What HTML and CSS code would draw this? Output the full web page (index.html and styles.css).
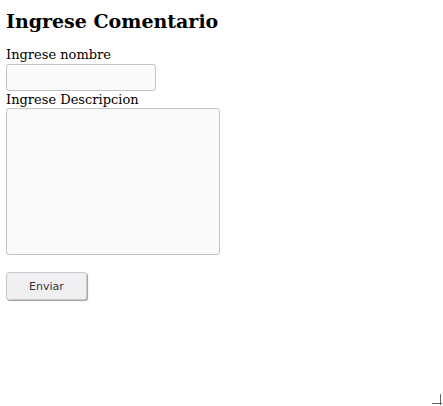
FILE: index.html
```html
<!DOCTYPE html>
<html lang="es">
<head>
<meta charset="utf-8">
<title>Ingrese Comentario</title>
<link rel="stylesheet" href="styles.css">
</head>
<body>
<h3 class="title">Ingrese Comentario</h3>
<form class="form">
  <label class="label" for="nombre">Ingrese nombre</label>
  <input class="field" id="nombre" type="text">
  <label class="label" for="desc">Ingrese Descripcion</label>
  <textarea class="area" id="desc"></textarea>
  <button class="btn" type="button">Enviar</button>
</form>
<svg class="corner" width="12" height="12" viewBox="0 0 12 12" aria-hidden="true">
  <path d="M10.5 1V12M2 10.5H12" stroke="#666" stroke-width="1" fill="none"/>
</svg>
</body>
</html>
```
FILE: styles.css
```css
html, body {
  height: 100%;
}
body {
  margin: 0;
  padding: 6px;
  box-sizing: border-box;
  font-family: "DejaVu Serif", serif;
  font-size: 13px;
  color: #000;
  background: #fff;
  position: relative;
}
.title {
  font-size: 19px;
  font-weight: bold;
  line-height: 22px;
  margin: 4px 0 15px;
}
.form {
  display: flex;
  flex-direction: column;
  align-items: flex-start;
}
.label {
  display: block;
  line-height: 16px;
}
.field {
  width: 150px;
  height: 27px;
  box-sizing: border-box;
  border: 1px solid #c3c3c3;
  border-radius: 3px;
  background: #fafafa;
  margin: 1px 0 1px;
  padding: 0 4px;
}
.area {
  width: 214px;
  height: 147px;
  box-sizing: border-box;
  border: 1px solid #c3c3c3;
  border-radius: 3px;
  background: #fafafa;
  margin: 0;
  resize: none;
}
.btn {
  margin-top: 17px;
  width: 81px;
  height: 28px;
  box-sizing: border-box;
  border: 1px solid #c8c8cc;
  border-radius: 3px;
  background: #f0f0f3;
  box-shadow: 1px 1px 1px #a0a0a0;
  font-family: "DejaVu Sans", sans-serif;
  font-size: 11px;
  color: #333;
  padding: 0;
}
.corner {
  position: absolute;
  right: 1px;
  bottom: 1px;
}
```
